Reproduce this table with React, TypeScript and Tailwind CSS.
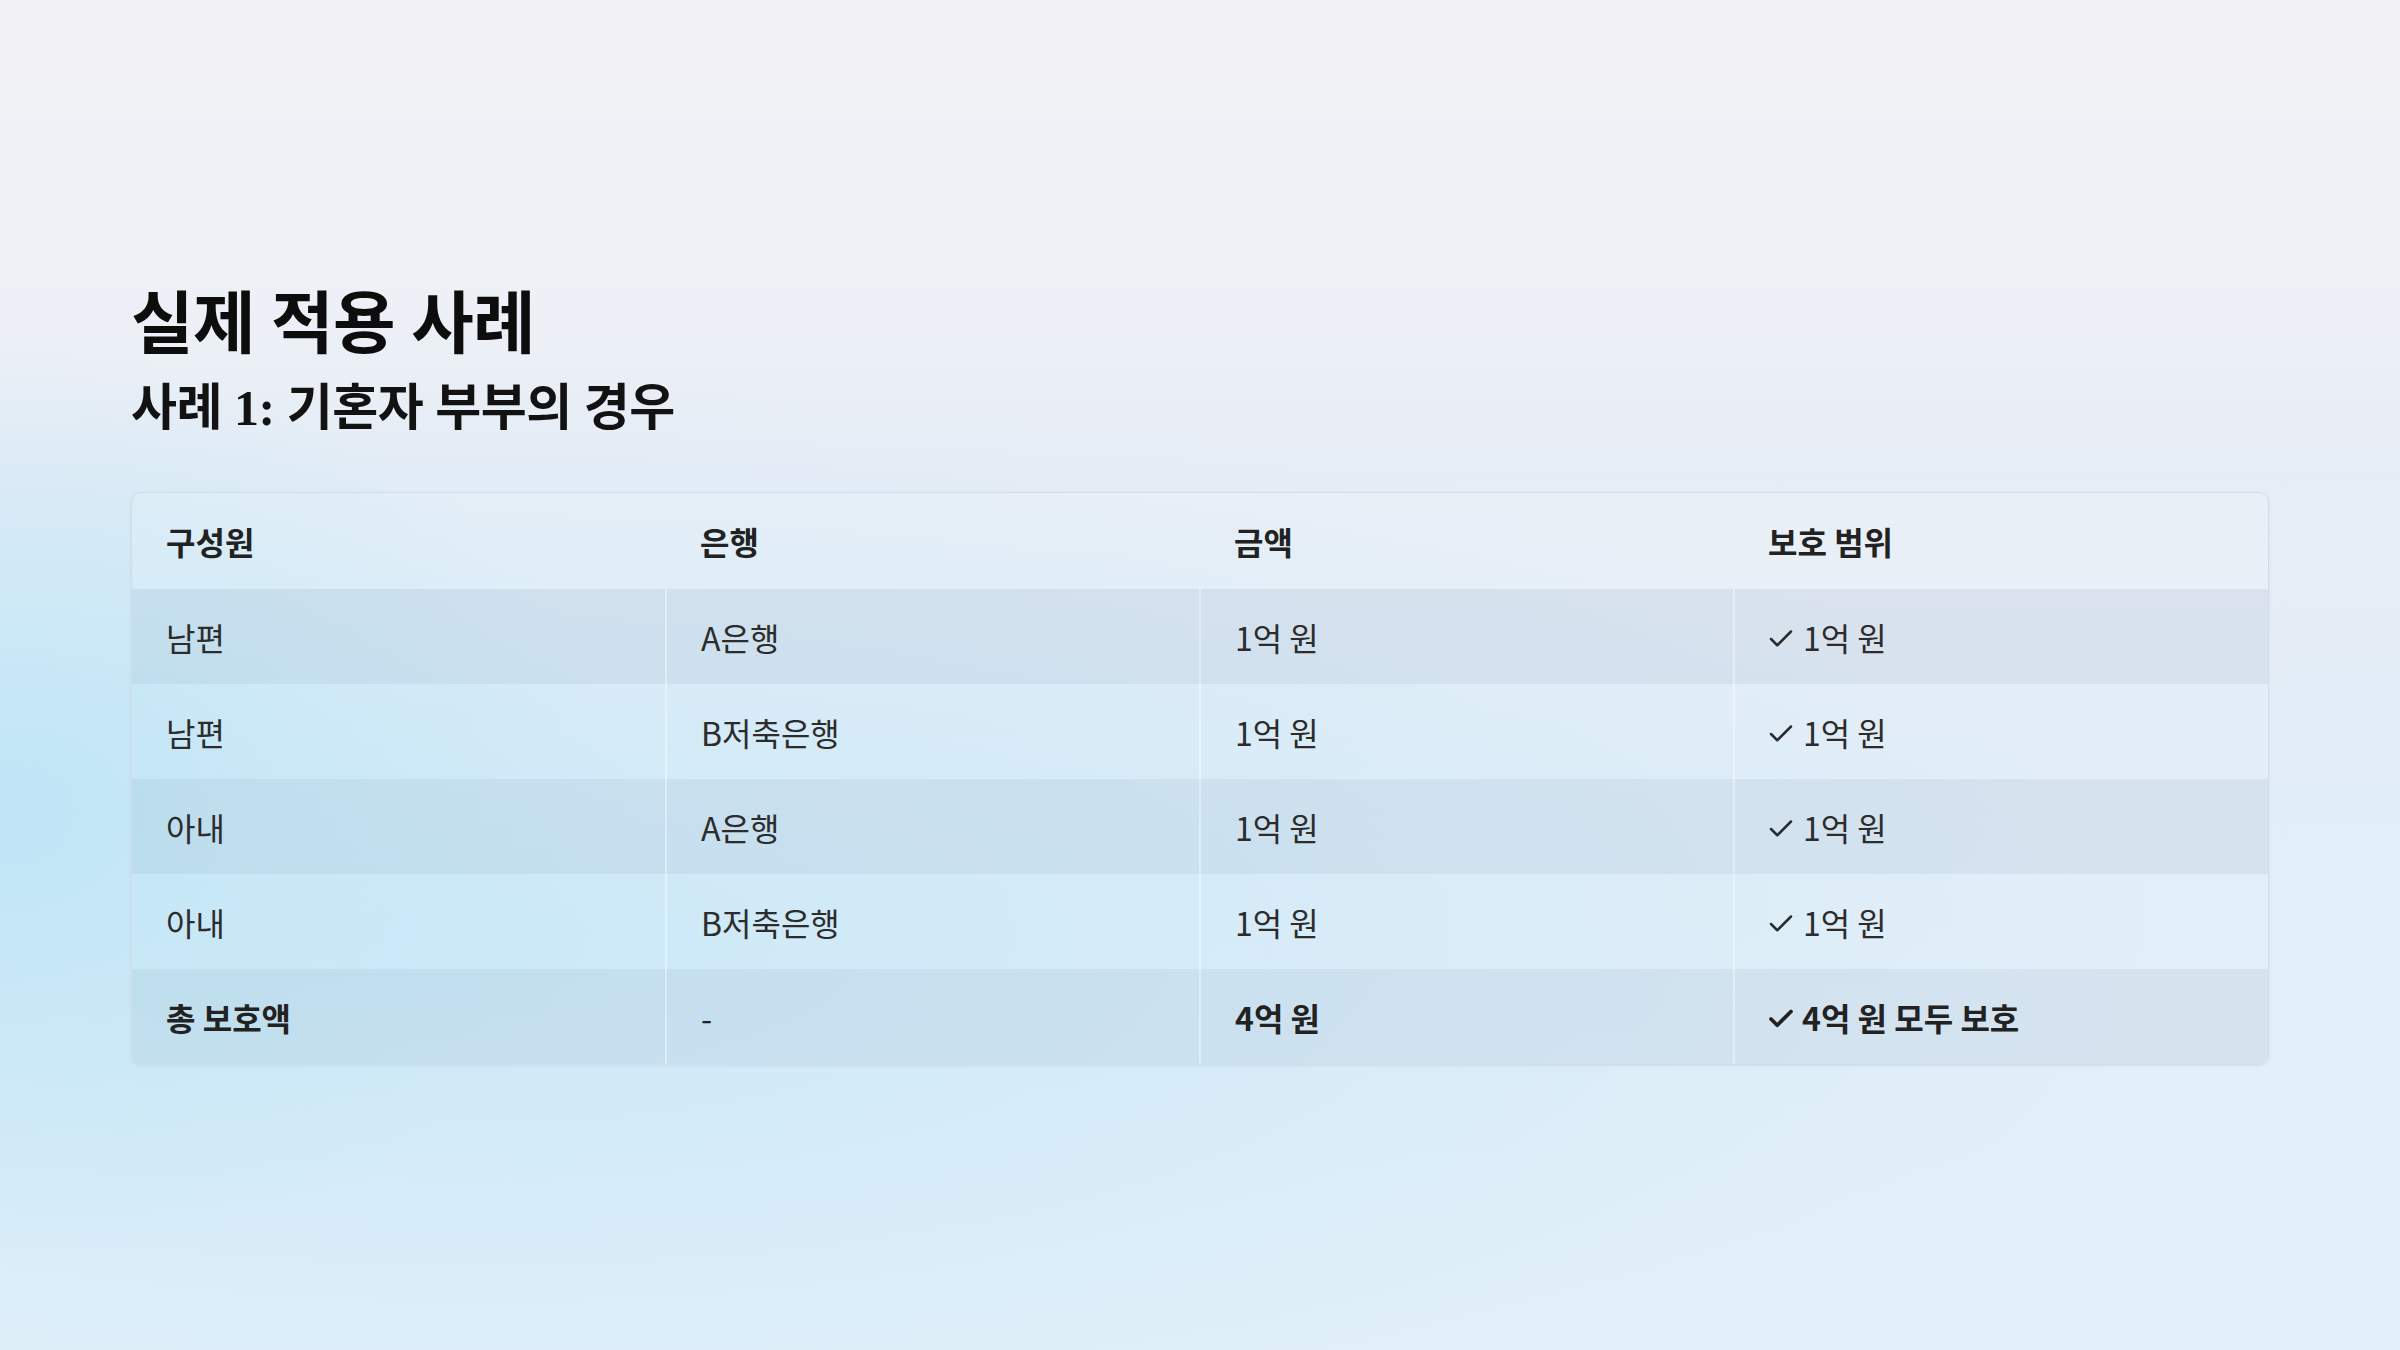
import React from "react";
import { Check } from "lucide-react";

// 사례 표 데이터: 각 행 = 구성원, 은행, 금액, 보호 범위
const rows = [
  { who: "남편", bank: "A은행", amount: "1억 원", cover: "1억 원" },
  { who: "남편", bank: "B저축은행", amount: "1억 원", cover: "1억 원" },
  { who: "아내", bank: "A은행", amount: "1억 원", cover: "1억 원" },
  { who: "아내", bank: "B저축은행", amount: "1억 원", cover: "1억 원" },
];

const headers = ["구성원", "은행", "금액", "보호 범위"];

export default function App() {
  return (
    <div className="flex min-h-screen w-full flex-col justify-center bg-[radial-gradient(ellipse_26%_34%_at_0%_60%,#bfe5f6_0%,rgba(196,231,246,0.6)_45%,rgba(220,236,248,0)_100%),radial-gradient(ellipse_70%_42%_at_20%_70%,rgba(200,232,247,0.85)_0%,rgba(220,236,248,0)_100%),linear-gradient(180deg,#f2f2f6_0%,#eff1f6_18%,#e7edf6_35%,#e2eef8_60%,#e3f0fa_100%)] px-[131px] font-['Noto_Sans_CJK_KR','Noto_Sans',sans-serif]">
      <h1 className="font-['Liberation_Serif','Noto_Sans_CJK_KR',serif] text-[68px] font-bold leading-[1.2] tracking-[-0.01em] text-[#0d0d0d]">
        실제 적용 사례
      </h1>
      <h2 className="mt-[10px] font-['Liberation_Serif','Noto_Sans_CJK_KR',serif] text-[50px] font-bold leading-[1.3] tracking-[-0.01em] text-[#121212]">
        사례 1: 기혼자 부부의 경우
      </h2>

      <div className="mt-[51px] overflow-hidden rounded-[10px] border border-[#d3dde7] shadow-[0_1px_3px_rgba(120,150,175,0.15)]">
        <table className="w-full table-fixed border-collapse text-[32px] text-[#2c2c2c]">
          <thead>
            <tr className="bg-white/10">
              {headers.map((h) => (
                <th
                  key={h}
                  className="h-[96px] px-[34px] text-left font-bold text-[#222222]"
                >
                  {h}
                </th>
              ))}
            </tr>
          </thead>
          <tbody>
            {rows.map((r, i) => (
              <tr
                key={i}
                className={i % 2 === 0 ? "bg-[rgba(100,125,150,0.09)]" : "bg-transparent"}
              >
                <td className="h-[95px] border-r-2 border-white/40 px-[34px]">{r.who}</td>
                <td className="h-[95px] border-r-2 border-white/40 px-[34px]">{r.bank}</td>
                <td className="h-[95px] border-r-2 border-white/40 px-[34px]">{r.amount}</td>
                <td className="h-[95px] px-[34px]">
                  <span className="flex items-center gap-[7px]">
                    <Check className="-ml-[3px] h-[30px] w-[30px] translate-y-[2px]" strokeWidth={2} />
                    {r.cover}
                  </span>
                </td>
              </tr>
            ))}
            <tr className="bg-[rgba(100,125,150,0.09)] font-bold text-[#222222]">
              <td className="h-[95px] border-r-2 border-white/40 px-[34px]">총 보호액</td>
              <td className="h-[95px] border-r-2 border-white/40 px-[34px] font-normal">-</td>
              <td className="h-[95px] border-r-2 border-white/40 px-[34px]">4억 원</td>
              <td className="h-[95px] px-[34px]">
                <span className="flex items-center gap-[6px]">
                  <Check className="-ml-[3px] h-[30px] w-[30px] translate-y-[2px]" strokeWidth={3} />
                  4억 원 모두 보호
                </span>
              </td>
            </tr>
          </tbody>
        </table>
      </div>
    </div>
  );
}
